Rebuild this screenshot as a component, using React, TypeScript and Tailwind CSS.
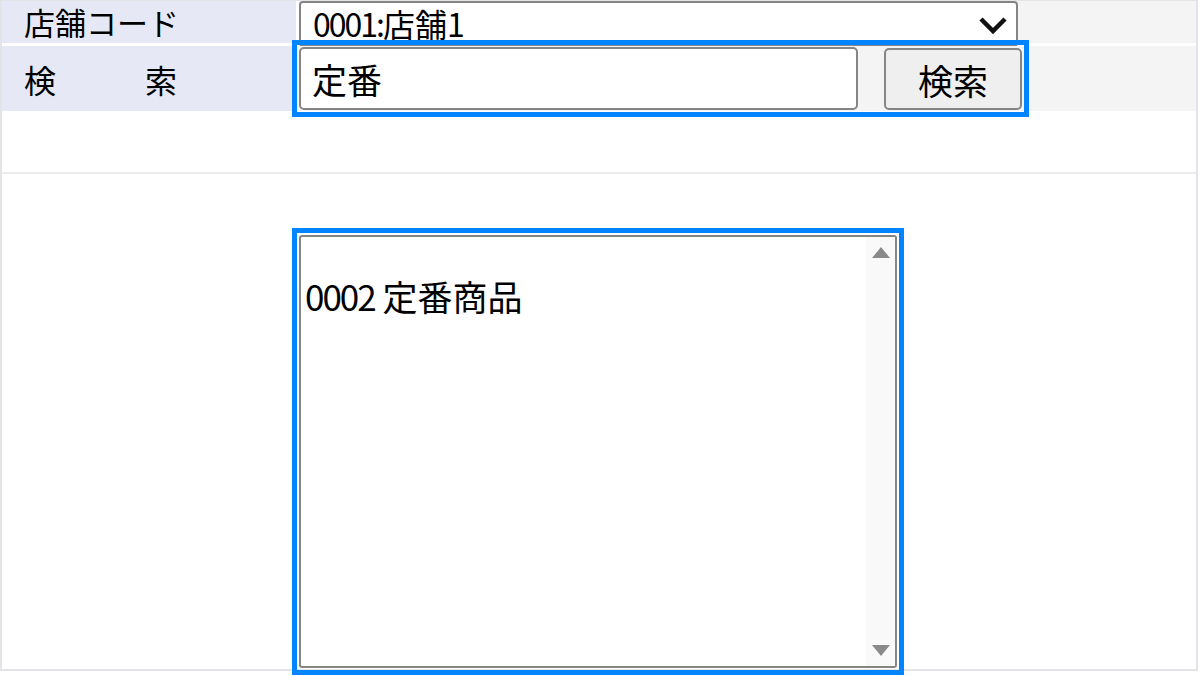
const font = { fontFamily: '"Noto Sans CJK JP", "Liberation Sans", sans-serif' };

export default function App() {
  return (
    <div className="w-[1198px] h-[676px] bg-white text-black" style={font}>
      <div className="w-[1198px] h-[671px] border-2 border-[#e2e4e8] border-t-[1px]">
        {/* 店舗コード */}
        <div className="flex h-[42px] gap-[3px] bg-white">
          <div className="w-[294px] bg-[#e6e9f5] pl-[22px] flex items-center text-[31px] leading-[42px]">
            店舗コード
          </div>
          <div className="flex-1 bg-[#f4f4f4] flex">
            <div className="w-[719px] h-[46px] bg-white border-2 border-[#858585] rounded-[4px] flex items-start pl-[12px] pr-[9px] text-[32px] leading-[40px]">
              <span className="flex-1">
                <span className="tracking-[-2px]">0001:</span>店舗1
              </span>
              <svg width="28" height="19" viewBox="0 0 28 19" className="mt-[13px]">
                <polyline points="2,3 14,15 26,3" fill="none" stroke="#111" strokeWidth="4.5" />
              </svg>
            </div>
          </div>
        </div>
        <div className="h-[3px] bg-white" />
        {/* 検索 */}
        <div className="flex h-[65px] gap-[3px] bg-white">
          <div className="w-[294px] bg-[#e6e9f5] pl-[22px] flex items-center text-[32px] leading-none">
            <span>検</span>
            <span className="ml-[89px]">索</span>
          </div>
          <div className="flex-1 bg-[#f4f4f4] flex items-center">
            <div className="relative z-10 flex gap-[26px] outline-[5px] outline-offset-[2px] outline-[#0084ff]">
              <div className="w-[559px] h-[63px] bg-white border-2 border-[#858585] rounded-[5px] flex items-center pl-[11px] text-[35px] leading-none">
                定番
              </div>
              <div className="w-[138px] h-[62px] mt-[1px] bg-[#efefef] border-2 border-[#858585] rounded-[5px] flex items-center justify-center text-[35px] leading-none">
                検索
              </div>
            </div>
          </div>
        </div>
        <div className="h-[61px]" />
        <div className="h-[2px] bg-[#ececec]" />
        {/* 商品一覧 */}
        <div className="pt-[61px] flex justify-center">
          <div className="-ml-[2px] outline-[5px] outline-offset-[2px] outline-[#0084ff]">
            <div className="w-[598px] h-[433px] border-2 border-[#858585] rounded-[3px] flex bg-white">
              <div className="flex-1 pt-[2px] text-[35px]">
                <div className="h-[37px]" />
                <div className="h-[40px] leading-[40px] pl-[4px]">
                  <span className="tracking-[-2px]">0002</span> 定番商品
                </div>
              </div>
              <div className="w-[29px] bg-[#f9f9f9] flex flex-col items-center justify-between py-[10px]">
                <svg width="18" height="11" viewBox="0 0 18 11">
                  <polygon points="9,0 18,11 0,11" fill="#8a8a8a" />
                </svg>
                <svg width="18" height="11" viewBox="0 0 18 11">
                  <polygon points="0,0 18,0 9,11" fill="#8a8a8a" />
                </svg>
              </div>
            </div>
          </div>
        </div>
      </div>
    </div>
  );
}
